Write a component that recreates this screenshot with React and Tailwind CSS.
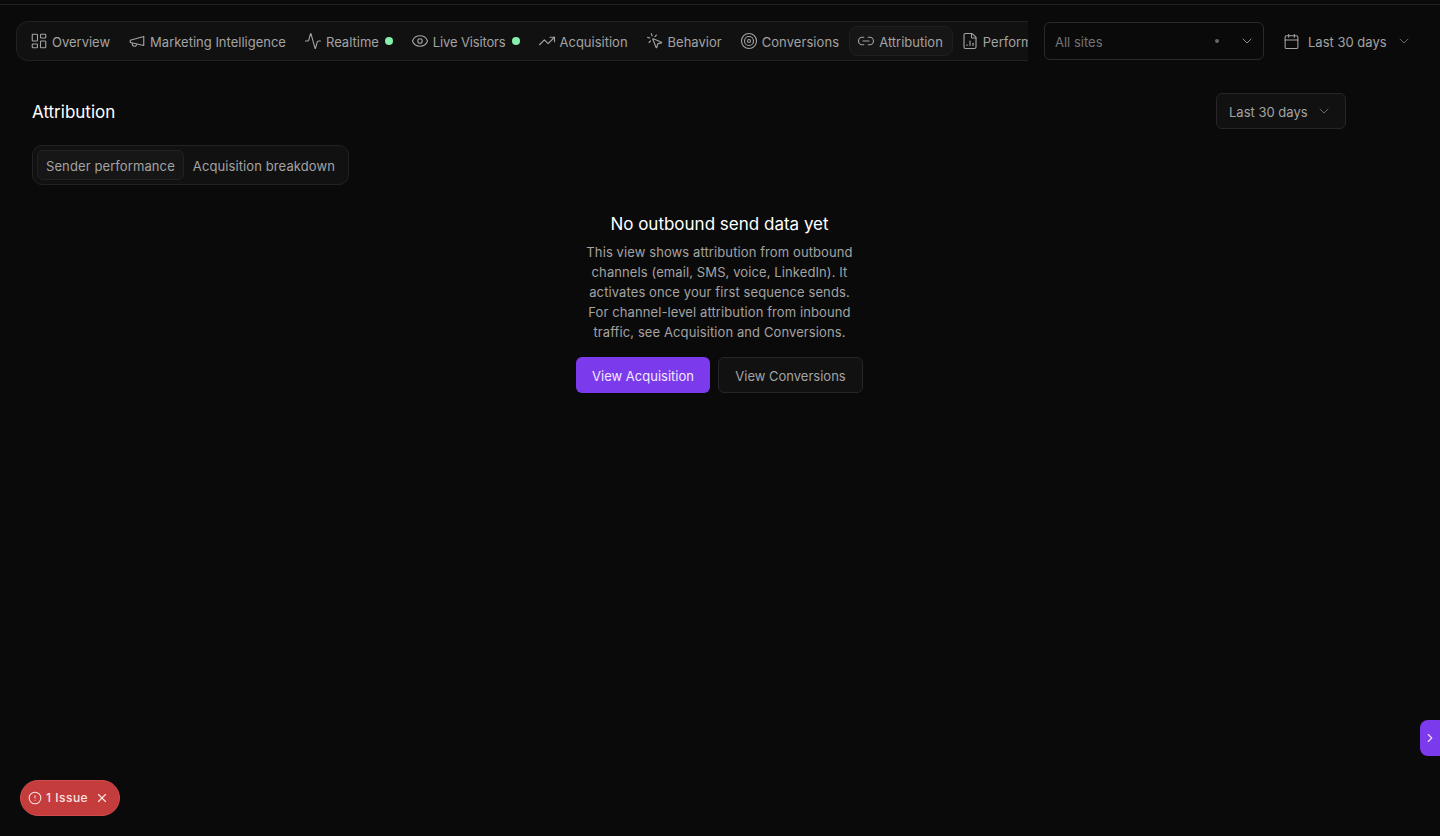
import {
  Activity,
  AlertCircle,
  Calendar,
  ChevronDown,
  ChevronRight,
  Eye,
  FileChartColumn,
  LayoutDashboard,
  Link2,
  MousePointerClick,
  Target,
  TrendingUp,
  X,
} from 'lucide-react'

function MegaphoneIcon(props) {
  return (
    <svg width="18" height="18" viewBox="0 0 24 24" fill="none" stroke="currentColor" strokeWidth="1.75" strokeLinecap="round" strokeLinejoin="round" {...props}>
      <path d="m3 11 18-5v12L3 14v-3z" />
      <path d="M11.6 16.8a3 3 0 1 1-5.8-1.6" />
    </svg>
  )
}

const TABS = [
  { label: 'Overview', icon: LayoutDashboard },
  { label: 'Marketing Intelligence', icon: MegaphoneIcon },
  { label: 'Realtime', icon: Activity, live: true },
  { label: 'Live Visitors', icon: Eye, live: true, text: 'tracking-[-0.15px]' },
  { label: 'Acquisition', icon: TrendingUp },
  { label: 'Behavior', icon: MousePointerClick },
  { label: 'Conversions', icon: Target, text: 'tracking-[0.08px]' },
  { label: 'Attribution', icon: Link2, active: true },
  { label: 'Performance', icon: FileChartColumn },
]

function NavTab({ tab }) {
  const Icon = tab.icon
  return (
    <button
      className={`flex h-[30px] shrink-0 items-center gap-1 rounded-lg border pl-[7px] pr-[9px] ${
        tab.active ? 'border-[#1f1f1f] bg-[#161616]' : 'border-transparent'
      }`}
    >
      <Icon size={18} strokeWidth={1.5} className="text-[#a3a3a3]" />
      <span className={`whitespace-nowrap pt-1 ${tab.text || ''}`}>{tab.label}</span>
      {tab.live && <span className="ml-0.5 h-2 w-2 rounded-full bg-[#86efac]" />}
    </button>
  )
}

export default function App() {
  return (
    <div className="relative h-[836px] overflow-hidden bg-[#0a0a0a] font-['Inter',sans-serif] text-[13px] text-[#a3a3a3]">
      <div className="h-[5px] border-b border-[#222222]" />

      <header className="flex items-center pl-4 pt-4">
        <div className="w-[1012px] shrink-0 overflow-hidden">
          <nav className="flex h-10 w-max items-center rounded-l-xl border border-[#222222] bg-[#111111] pl-[5px] pr-2">
            {TABS.map((t) => (
              <NavTab key={t.label} tab={t} />
            ))}
          </nav>
        </div>

        <button className="ml-4 flex h-[38px] w-[220px] items-center rounded-md border border-[#2a2a2a] pl-[10px] pr-2 text-[#737373]">
          <span className="flex-1 pt-1 text-left">All sites</span>
          <span className="mr-[20px] h-1 w-1 rounded-full bg-[#666666]" />
          <ChevronDown size={16} strokeWidth={1.5} className="text-[#8a8a8a]" />
        </button>

        <button className="ml-[19px] flex items-center">
          <Calendar size={17} strokeWidth={1.5} />
          <span className="ml-2 whitespace-nowrap pt-1">Last 30 days</span>
          <ChevronDown size={16} strokeWidth={1.5} className="ml-[9px] text-[#666666]" />
        </button>
      </header>

      <main className="px-8 pr-[94px] pt-8">
        <div className="flex items-center justify-between">
          <h1 className="pt-1 text-[17px] font-normal text-white">Attribution</h1>
          <button className="flex h-9 w-[130px] items-center gap-2 rounded-md border border-[#262626] bg-[#111111] pl-3">
            <span className="whitespace-nowrap pt-1">Last 30 days</span>
            <ChevronDown size={16} strokeWidth={1.5} className="text-[#666666]" />
          </button>
        </div>

        <div className="mt-4 flex h-10 w-[317px] items-center gap-px rounded-[10px] border border-[#222222] bg-[#111111] px-1 tracking-[0.1px]">
          <button className="flex h-[30px] items-center whitespace-nowrap rounded-md border border-[#222222] bg-[#161616] px-2 pt-1">
            Sender performance
          </button>
          <button className="flex h-[30px] items-center whitespace-nowrap px-2 pt-1">Acquisition breakdown</button>
        </div>

        <section className="ml-[-32px] mr-[-93px] flex flex-col items-center pt-[29px]">
          <h2 className="text-[17px] font-normal leading-5 text-white">No outbound send data yet</h2>
          <p className="mt-[8px] w-[275px] text-center leading-5 tracking-[0.1px] text-[#a3a3a3]">
            This view shows attribution from outbound channels (email, SMS, voice, LinkedIn). It activates once your
            first sequence sends. For channel-level attribution from inbound traffic, see Acquisition and Conversions.
          </p>
          <div className="mt-[15px] flex gap-2">
            <button className="h-9 w-[134px] rounded-md bg-[#7c3aed] pt-1 text-[#f0e9ff]">View Acquisition</button>
            <button className="h-9 w-[145px] rounded-md border border-[#262626] bg-[#111111] pt-1">View Conversions</button>
          </div>
        </section>
      </main>

      <button className="absolute bottom-5 left-5 flex h-9 w-[100px] items-center gap-1 rounded-full border border-[#d04c4c] bg-[#c53c3c] pl-[7px] text-xs font-medium tracking-[0.5px] text-[#fde2e2]">
        <AlertCircle size={14} strokeWidth={1.75} />
        <span className="whitespace-nowrap">1 Issue</span>
        <X size={14} className="ml-[3px]" />
      </button>

      <button className="absolute right-0 top-[720px] flex h-9 w-5 items-center justify-center rounded-l-lg bg-[#7c3aed] text-[#e9ddff]">
        <ChevronRight size={14} strokeWidth={2} />
      </button>
    </div>
  )
}
